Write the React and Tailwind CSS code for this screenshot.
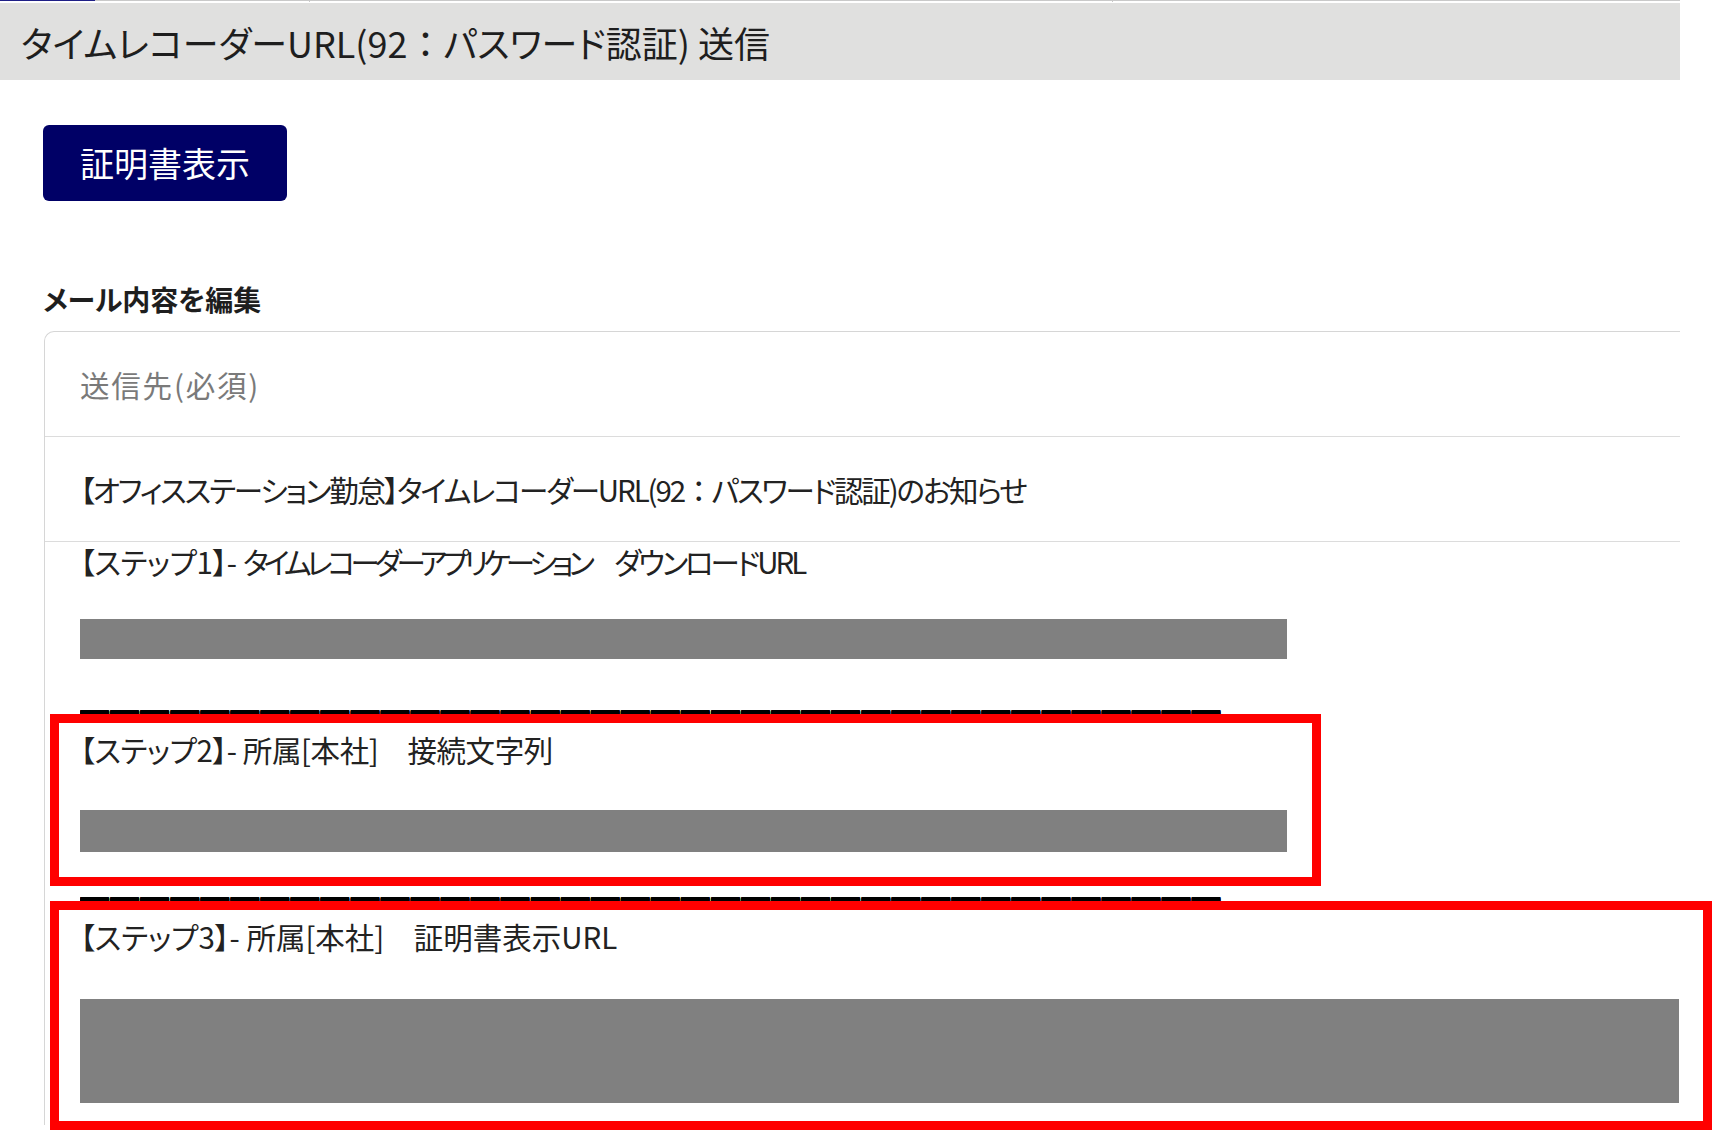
import React from "react";

const DASHES = "━".repeat(38);

function Colon() {
  return <span className="[font-feature-settings:normal]">：</span>;
}

function Dashes() {
  return (
    <div className="h-[37.5px] whitespace-nowrap flex items-center pb-[4px]">
      <div className="origin-left scale-x-[1.32] text-[22px] leading-[32px] font-bold tracking-[0.76px] text-black [text-shadow:0_-1px_0_#000,0_1px_0_#000,0_2px_0_#000]">{DASHES}</div>
    </div>
  );
}

export default function App() {
  return (
    <div className="relative w-[1732px] h-[1130px] overflow-hidden bg-white text-[#222] font-['Noto_Sans_CJK_JP','Noto_Sans',sans-serif] [font-feature-settings:'palt']">
      <div className="w-[1680px] overflow-hidden">
        {/* tab strip (cut off) */}
        <div className="flex h-[3px] items-start">
          <div className="w-[95px] h-[1px] bg-[#1f1f86]" />
          <div className="w-[215px] h-[2px] border-t border-r border-[#c9c9c9]" />
          <div className="w-[803px] h-[2px] border-t border-r border-[#c9c9c9]" />
          <div className="flex-1 h-[2px] border-t border-[#c9c9c9]" />
        </div>

        {/* title bar */}
        <div className="h-[77px] bg-[#e0e0df] flex items-center pl-[21px] text-[36px] leading-none text-[#1e1e1e] whitespace-nowrap">
          タイムレコーダーURL(92<Colon />パスワード認証) 送信
        </div>

        {/* button */}
        <div className="pl-[43px] pt-[45px]">
          <button className="w-[244px] h-[76px] rounded-[6px] bg-[#000066] text-white text-[34px] leading-none flex items-center justify-center">
            証明書表示
          </button>
        </div>

        {/* section label */}
        <div className="mt-[80px] pl-[43px] h-[36px] leading-[36px] text-[28px] font-bold text-[#1e1e1e]">
          メール内容を編集
        </div>

        {/* card */}
        <div className="mt-[14px] ml-[44px] w-[1700px] h-[794px] border-l border-t border-[#d6d6d6] rounded-tl-[10px]">
          <div className="h-[105px] border-b border-[#dcdcdc] flex items-center pl-[35px] text-[29.5px] tracking-[1.8px] text-[#7a7a7a]">
            送信先(必須)
          </div>
          <div className="h-[105px] border-b border-[#dcdcdc] flex items-center pl-[35px] text-[29.5px] tracking-[-2.1px] whitespace-nowrap">
            【オフィスステーション勤怠】タイムレコーダーURL(92<Colon />パスワード認証)のお知らせ
          </div>

          <div className="pl-[35px] pt-[1px] text-[29.5px] leading-[37.5px]">
            <div className="h-[37.5px] whitespace-nowrap">
              <span className="tracking-[-0.4px]">【ステップ1】- </span>
              <span className="tracking-[-5px]">タイムレコーダーアプリケーション　</span>
              <span className="tracking-[-3px]">ダウンロードURL</span>
            </div>
            <div className="h-[37.5px]" />
            <div className="h-[37.5px] pt-[1px]">
              <div className="h-[40px] w-[1207px] bg-[#808080]" />
            </div>
            <div className="h-[37.5px]" />
            <Dashes />

            <div className="h-[37.5px] whitespace-nowrap tracking-[-0.4px]">【ステップ2】- 所属[本社]　接続文字列</div>
            <div className="h-[37.5px]" />
            <div className="h-[37.5px] pt-[4px]">
              <div className="h-[42px] w-[1207px] bg-[#808080]" />
            </div>
            <div className="h-[37.5px]" />
            <Dashes />

            <div className="h-[37.5px] whitespace-nowrap">【ステップ3】- 所属[本社]　証明書表示URL</div>
            <div className="h-[37.5px]" />
            <div className="h-[37.5px] pt-[6px]">
              <div className="h-[104px] w-[1599px] bg-[#808080]" />
            </div>
          </div>
        </div>
      </div>

      {/* annotation boxes */}
      <div className="absolute left-[50px] top-[714px] w-[1271px] h-[172px] border-[9px] border-[#ff0000]" />
      <div className="absolute left-[50px] top-[901px] w-[1662px] h-[229px] border-[9px] border-[#ff0000]" />
    </div>
  );
}
